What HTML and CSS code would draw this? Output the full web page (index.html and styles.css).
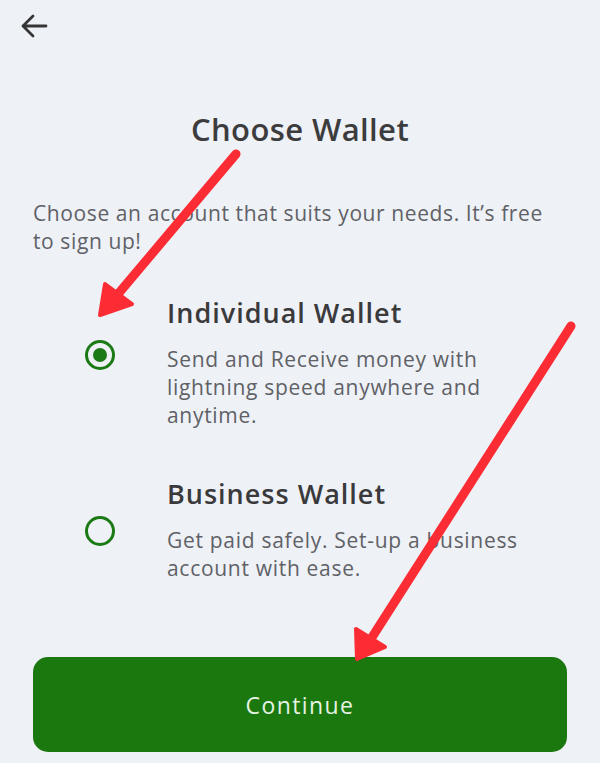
FILE: index.html
```html
<!DOCTYPE html>
<html>
<head>
<meta charset="utf-8">
<link rel="stylesheet" href="styles.css">
</head>
<body>
<div class="screen">
  <header class="topbar">
    <svg class="back" width="30" height="26" viewBox="0 0 30 26">
      <path d="M27 13 H4 M14 3 L4 13 L14 23" fill="none" stroke="#353535" stroke-width="2.8" stroke-linecap="round" stroke-linejoin="round"/>
    </svg>
  </header>
  <h1 class="title">Choose Wallet</h1>
  <p class="intro">Choose an account that suits your needs. It’s free to sign up!</p>
  <div class="options">
    <div class="option first">
      <span class="radio checked"></span>
      <div class="opt-text">
        <h2 class="opt-title">Individual Wallet</h2>
        <p class="opt-desc">Send and Receive money with lightning speed anywhere and anytime.</p>
      </div>
    </div>
    <div class="option second">
      <span class="radio"></span>
      <div class="opt-text">
        <h2 class="opt-title">Business Wallet</h2>
        <p class="opt-desc">Get paid safely. Set-up a business account with ease.</p>
      </div>
    </div>
  </div>
  <button class="continue">Continue</button>
  <svg class="arrows" width="600" height="763" viewBox="0 0 600 763">
    <g fill="#fb2c33" stroke="#fb2c33" stroke-linecap="round" stroke-linejoin="round">
      <line x1="236" y1="154" x2="113" y2="300" stroke-width="9"/>
      <polygon points="100,315 105,284 132,304" stroke-width="4"/>
      <line x1="571" y1="326" x2="369" y2="642" stroke-width="9"/>
      <polygon points="357,659 356,629 385,647" stroke-width="4"/>
    </g>
  </svg>
</div>
</body>
</html>
```
FILE: styles.css
```css
html, body {
  margin: 0;
  padding: 0;
}
body {
  background: #eef1f6;
  width: 600px;
  height: 763px;
  overflow: hidden;
}
.screen {
  position: relative;
  width: 600px;
  height: 763px;
  box-sizing: border-box;
  padding: 0 33px;
  display: flex;
  flex-direction: column;
}
.topbar {
  height: 52px;
  display: flex;
  align-items: center;
  margin-left: -14px;
}
.back {
  display: block;
  margin-top: -1px;
}
.title {
  margin: 56px 0 0;
  text-align: center;
  font-family: "Open Sans", sans-serif;
  font-weight: 600;
  font-size: 31px;
  line-height: 42px;
  letter-spacing: 0.4px;
  color: #3c3c3e;
}
.intro {
  margin: 49px 0 0;
  font-family: "Open Sans", sans-serif;
  font-size: 21px;
  line-height: 28px;
  letter-spacing: 0.6px;
  color: #606166;
}
.options {
  display: flex;
  flex-direction: column;
  gap: 47px;
  margin-top: 40px;
}
.option {
  display: flex;
  align-items: center;
  gap: 52px;
  padding-left: 52px;
}
.option.first .radio {
  margin-top: -14px;
}
.option.second .radio {
  margin-top: 4px;
}
.radio {
  flex: none;
  width: 24px;
  height: 24px;
  border: 3px solid #1c7a16;
  border-radius: 50%;
  position: relative;
}
.radio.checked::after {
  content: "";
  position: absolute;
  left: 5px;
  top: 5px;
  width: 14px;
  height: 14px;
  border-radius: 50%;
  background: #1c7a16;
}
.opt-text {
  width: 375px;
}
.opt-title {
  margin: 0 0 14px;
  font-family: "Open Sans", sans-serif;
  font-weight: 600;
  font-size: 27px;
  line-height: 36px;
  letter-spacing: 1px;
  color: #3a3a3c;
}
.opt-desc {
  margin: 0;
  font-family: "Open Sans", sans-serif;
  font-size: 21px;
  line-height: 28px;
  letter-spacing: 0.7px;
  color: #606166;
}
.continue {
  margin-top: auto;
  margin-bottom: 11px;
  height: 95px;
  border: none;
  border-radius: 15px;
  background: #1a780f;
  color: #e6f3e2;
  font-family: "Open Sans", sans-serif;
  font-size: 23px;
  letter-spacing: 1.4px;
}
.arrows {
  position: absolute;
  left: 0;
  top: 0;
  pointer-events: none;
}
```
